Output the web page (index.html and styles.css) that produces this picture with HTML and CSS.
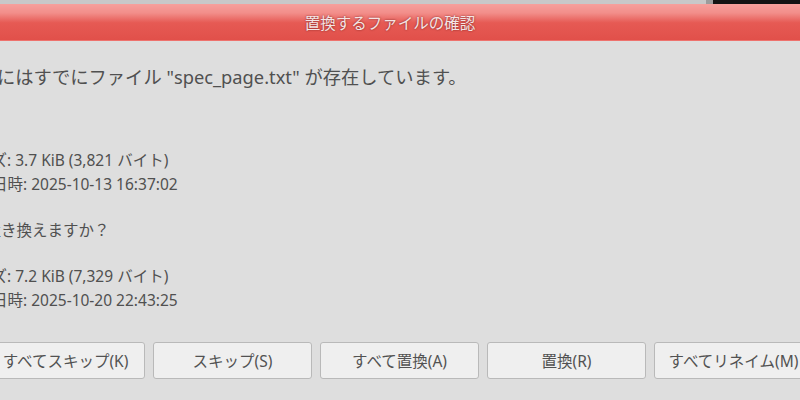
FILE: index.html
```html
<!DOCTYPE html>
<html lang="ja">
<head>
<meta charset="utf-8">
<title>置換するファイルの確認</title>
<link rel="stylesheet" href="styles.css">
</head>
<body>
<div class="topstrip">
  <div class="strip-grey"></div>
  <div class="strip-edge"></div>
  <div class="strip-dark"></div>
</div>
<div class="titlebar"><span class="title">置換するファイルの確認</span></div>
<div class="dialog">
  <div class="msg">このフォルダーにはすでにファイル "spec_page.txt" が存在しています。</div>
  <div class="file-row">
    <div class="file-icon"></div>
    <div class="file-info">
      <div>サイズ: 3.7 KiB (3,821 バイト)</div>
      <div>更新日時: 2025-10-13 16:37:02</div>
    </div>
  </div>
  <div class="question">次のファイルで置き換えますか？</div>
  <div class="file-row">
    <div class="file-icon"></div>
    <div class="file-info">
      <div>サイズ: 7.2 KiB (7,329 バイト)</div>
      <div>更新日時: 2025-10-20 22:43:25</div>
    </div>
  </div>
</div>
<div class="actions">
  <button class="btn">すべてスキップ(K)</button>
  <button class="btn">スキップ(S)</button>
  <button class="btn">すべて置換(A)</button>
  <button class="btn">置換(R)</button>
  <button class="btn">すべてリネイム(M)</button>
</div>
</body>
</html>
```
FILE: styles.css
```css
html, body {
  margin: 0;
  padding: 0;
}
body {
  width: 800px;
  height: 400px;
  overflow: hidden;
  background: #dedede;
  font-family: "Noto Sans", "Noto Sans CJK JP", sans-serif;
  color: #505050;
}
.topstrip {
  display: flex;
  height: 4px;
}
.strip-grey {
  flex: 0 0 706px;
  background: #c8c8c8;
}
.strip-edge {
  flex: 0 0 7px;
  background: #9c9c9c;
}
.strip-dark {
  flex: 1;
  background: #131313;
}
.titlebar {
  height: 36px;
  display: flex;
  align-items: center;
  justify-content: center;
  background: linear-gradient(#f6a09c 0%, #f28e8a 25%, #e65a54 52%, #e1504a 100%);
  border-bottom: 1px solid #ee726d;
}
.title {
  font-family: "Noto Sans CJK JP", sans-serif;
  font-size: 15.5px;
  color: #f6e4e4;
  text-shadow: 0 0 2px rgba(90, 20, 20, 0.8);
  margin-left: -20px;
}
.dialog {
  margin-left: -123px;
  padding-top: 24px;
  display: flex;
  flex-direction: column;
  white-space: nowrap;
}
.msg {
  font-size: 18.3px;
  line-height: 24px;
  margin-left: -8px;
  margin-bottom: 59px;
}
.file-row {
  display: flex;
  align-items: center;
}
.file-icon {
  width: 64px;
  height: 48px;
  margin-right: 20px;
}
.file-info {
  font-size: 15.5px;
  line-height: 24px;
}
.question {
  font-size: 15.5px;
  line-height: 24px;
  margin: 22px 0 22px;
}
.actions {
  display: flex;
  gap: 8px;
  margin-left: -14px;
  margin-top: 30px;
}
.btn {
  flex: 0 0 159px;
  height: 37px;
  background: #efefef;
  border: 1px solid #b9b9b9;
  border-radius: 3px;
  font-family: "Noto Sans", "Noto Sans CJK JP", sans-serif;
  font-size: 15.5px;
  color: #525252;
  padding: 0;
  white-space: nowrap;
}
```
